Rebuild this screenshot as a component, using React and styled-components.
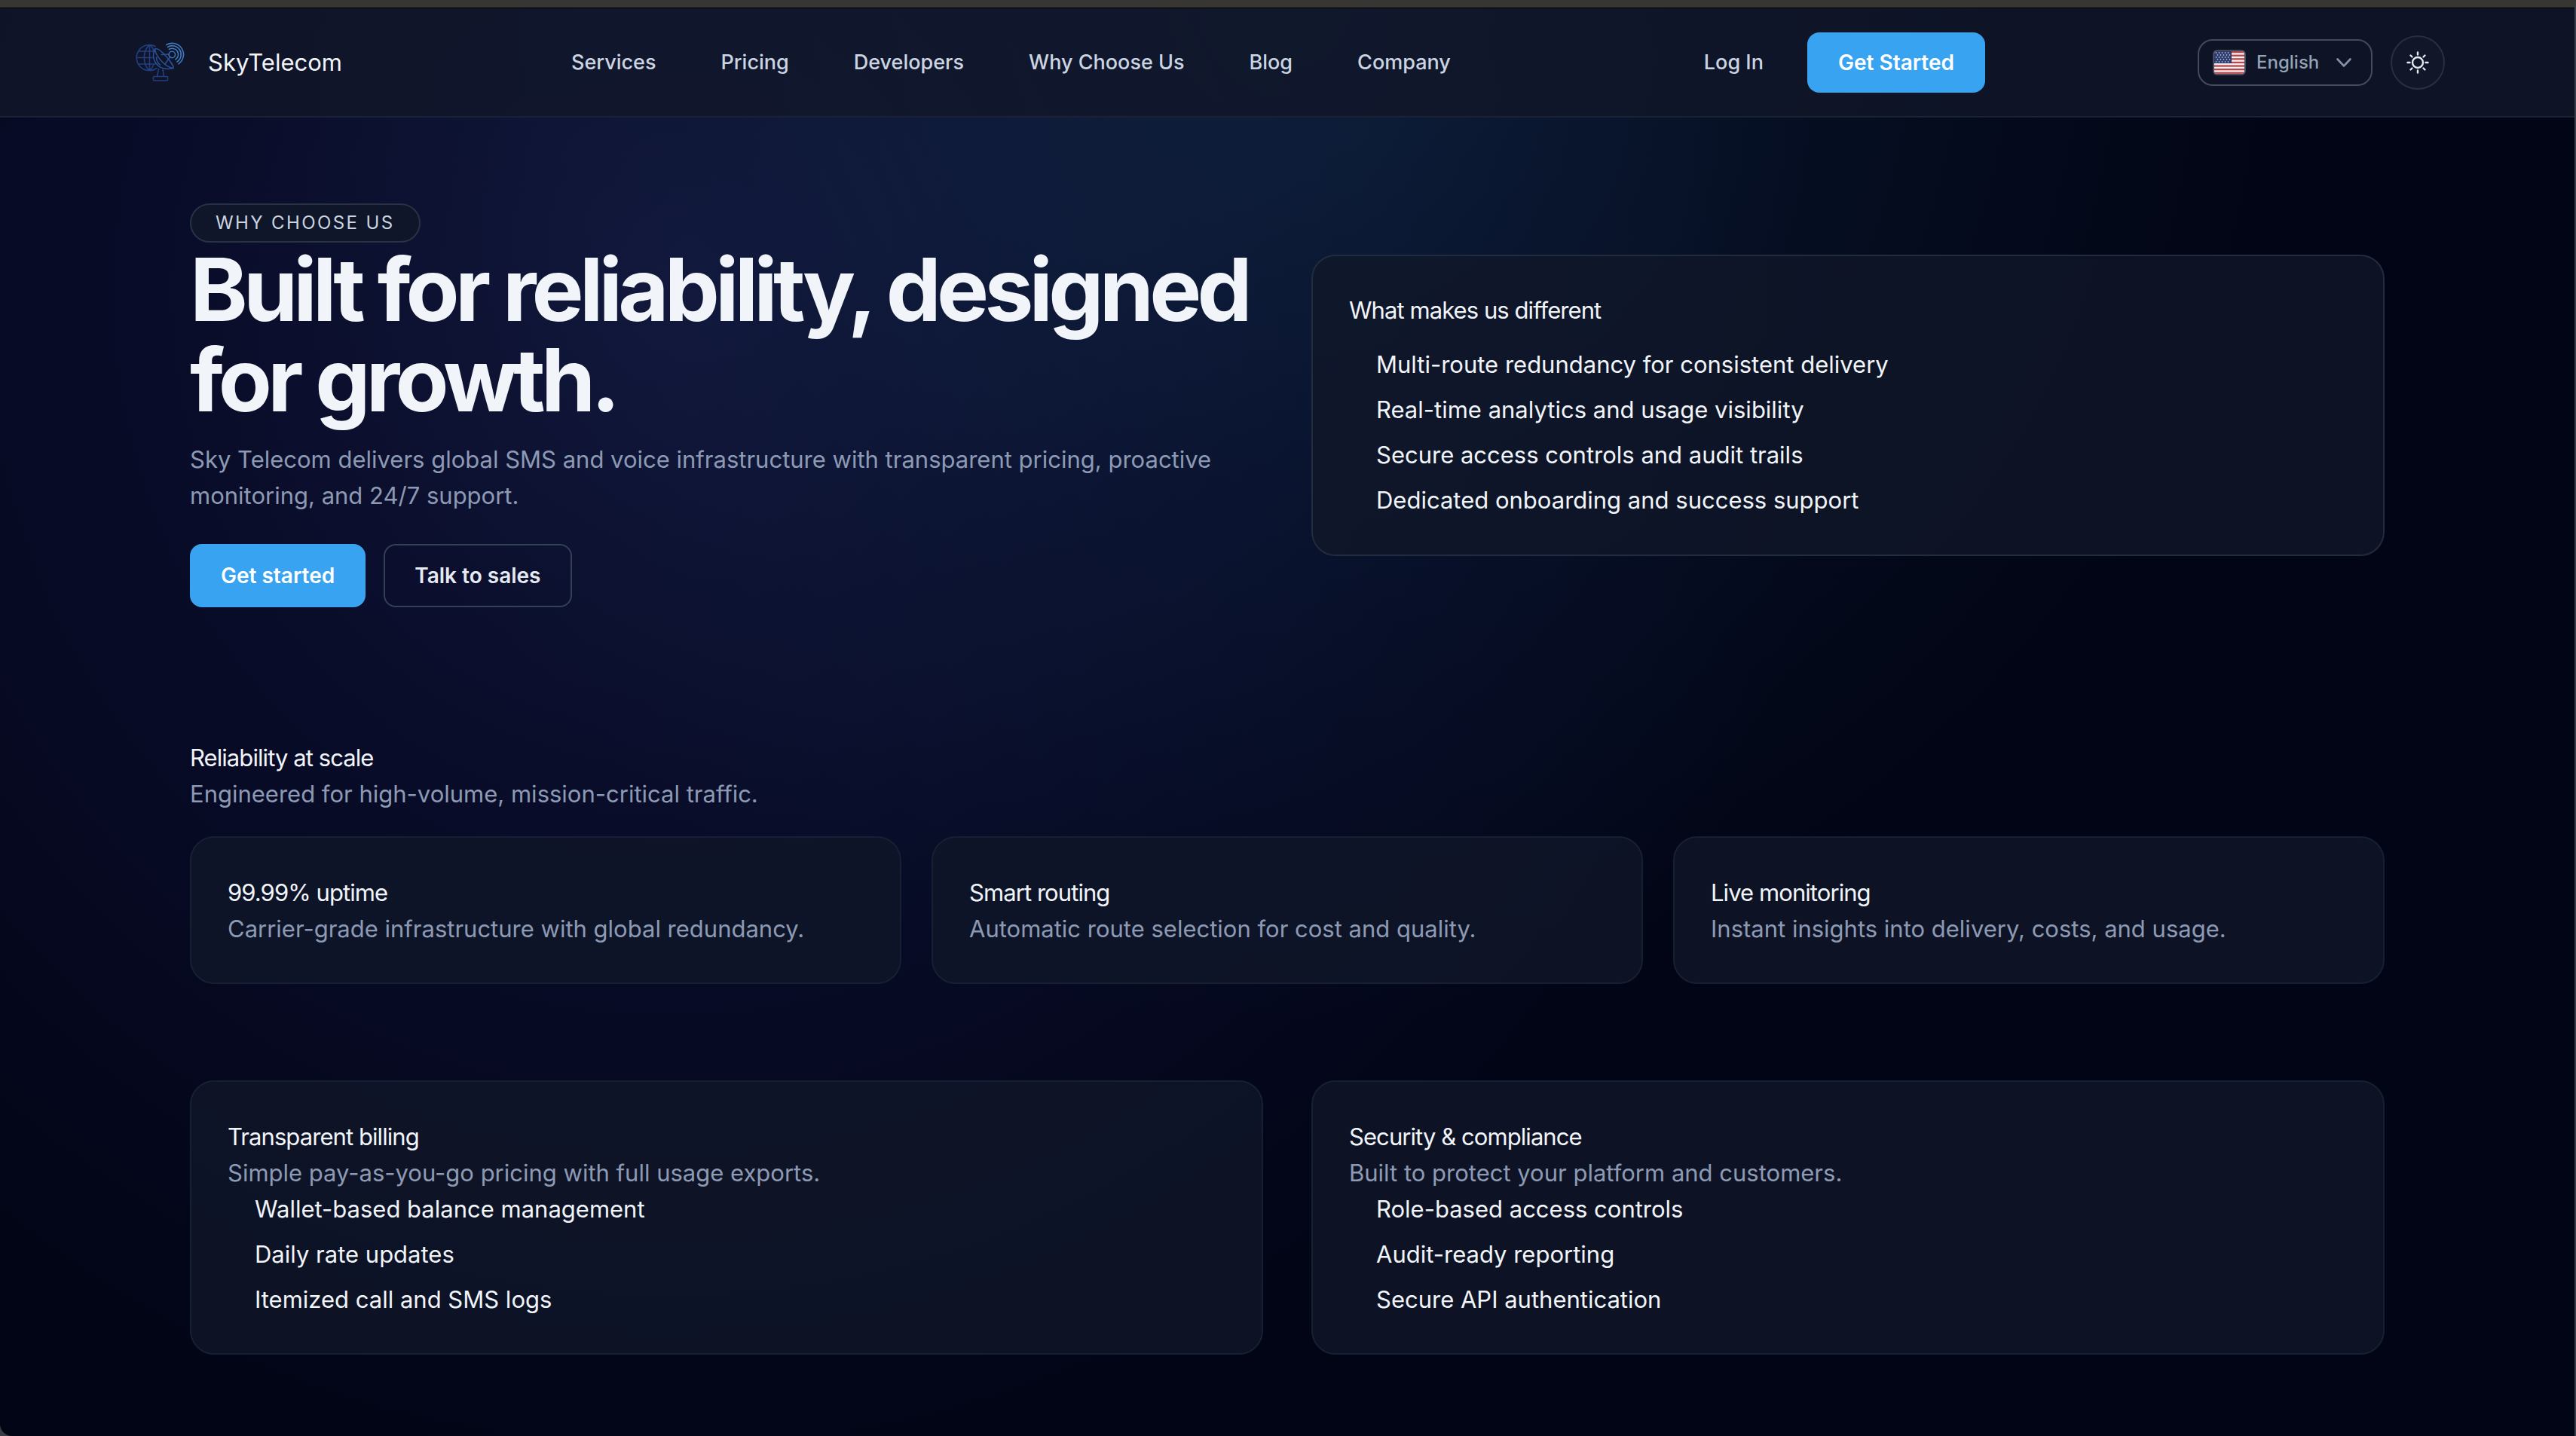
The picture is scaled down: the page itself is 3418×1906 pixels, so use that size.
import React from "react";
import styled, { createGlobalStyle } from "styled-components";

const Global = createGlobalStyle`
  *, *::before, *::after { box-sizing: border-box; }
  html { background: #3a3c46; }
  body {
    margin: 0;
    font-family: Inter, "Liberation Sans", sans-serif;
    font-size: 31px;
    line-height: 48px;
    color: #f1f5f9;
  }
  h1, h2, h3, p, ul { margin: 0; padding: 0; font-size: inherit; font-weight: 400; }
  a { color: inherit; text-decoration: none; }
  button, select { font-family: inherit; }
`;

const Page = styled.div`
  min-height: 100vh;
  display: flex;
  flex-direction: column;
  border-top: 10px solid #373632;
  border-right: 2px solid #3a3f4c;
  border-bottom-left-radius: 16px;
  background:
    radial-gradient(ellipse 1500px 1500px at 50% 0%, rgba(26, 68, 100, 0.36), rgba(20, 56, 90, 0.16) 50%, rgba(10, 50, 90, 0) 90%),
    radial-gradient(ellipse 1560px 1640px at 26% 20%, rgba(42, 46, 116, 0.37), rgba(28, 34, 104, 0.19) 55%, rgba(20, 20, 90, 0) 100%),
    #020515;
`;

const Header = styled.header`
  border-top: 1px solid #000;
  border-bottom: 2px solid #1a2334;
  background: rgba(17, 23, 41, 0.8);
`;

const HeaderInner = styled.div`
  max-width: 3072px;
  margin: 0 auto;
  height: 143px;
  padding: 0 0 0 8px;
  display: flex;
  align-items: center;
`;

const Brand = styled.a`
  display: flex;
  align-items: center;
  gap: 28px;
  flex: 0 0 578px;
`;

const Nav = styled.nav`
  display: flex;
  gap: 86px;
  flex: 1;
`;

const NavLink = styled.a`
  font-size: 27px;
  line-height: 40px;
  font-weight: 500;
  color: #cbd5e1;
  white-space: nowrap;
`;

const Account = styled.div`
  display: flex;
  align-items: center;
  gap: 58px;
  margin-right: 282px;
`;

const Button = styled.button`
  height: ${(p) => (p.$compact ? 80 : 84)}px;
  padding: 0 ${(p) => (p.$outline ? 39 : 41)}px;
  border-radius: 16px;
  border: ${(p) => (p.$outline ? "2px solid #334155" : "0")};
  background: ${(p) => (p.$outline ? "transparent" : "#38a3f1")};
  color: ${(p) => (p.$outline ? "#e5e9f2" : "#ffffff")};
  font-size: 28px;
  font-weight: 600;
  line-height: 40px;
  white-space: nowrap;
`;

const Tools = styled.div`
  display: flex;
  align-items: center;
  gap: 24px;
`;

const Language = styled.label`
  display: flex;
  align-items: center;
  width: 232px;
  height: 62px;
  padding: 0 26px 0 18px;
  gap: 14px;
  border: 2px solid #434b5d;
  border-radius: 20px;
`;

const LanguageSelect = styled.select`
  appearance: none;
  border: 0;
  padding: 0;
  background: transparent;
  color: #94a3b8;
  font-size: 24px;
  line-height: 32px;
  font-weight: 500;
  flex: 1;
  min-width: 0;
`;

const ThemeButton = styled.button`
  width: 72px;
  height: 72px;
  padding: 0;
  border: 2px solid #263044;
  border-radius: 50%;
  background: #111628;
  display: grid;
  place-items: center;
`;

const Main = styled.main`
  width: 100%;
  max-width: 3072px;
  margin: 0 auto;
  padding: 114px 80px 80px;
`;

const Hero = styled.section`
  display: grid;
  grid-template-columns: 1fr 1fr;
  gap: 64px;
  align-items: center;
`;

const Pill = styled.span`
  display: block;
  width: fit-content;
  margin-bottom: 2px;
  padding: 8px 32px;
  border: 2px solid #273244;
  border-radius: 28px;
  background: #0f1629;
  color: #cbd5e1;
  font-size: 24px;
  line-height: 32px;
  letter-spacing: 0.1em;
  text-transform: uppercase;
`;

const Title = styled.h1`
  && { font-size: 116px; font-weight: 700; }
  line-height: 120px;
  letter-spacing: -0.05em;
`;

const Muted = styled.p`
  color: #8d9ab4;
`;

const Lead = styled(Muted)`
  margin-top: 22px;
`;

const Actions = styled.div`
  display: flex;
  gap: 24px;
  margin-top: 40px;
`;

const Card = styled.article`
  padding: ${(p) => (p.$strong ? "48px" : "49px 48px 47px")};
  border: 2px solid ${(p) => (p.$strong ? "#222c3f" : "#172033")};
  border-radius: 32px;
  background: rgba(17, 23, 41, 0.78);
`;

const Heading = styled.h2`
  letter-spacing: -0.03em;
`;

const List = styled.ul`
  list-style: none;
  display: grid;
  gap: 12px;
  margin-top: ${(p) => (p.$spaced ? 24 : 0)}px;
  && { padding-left: 36px; }
`;

const Reliability = styled.section`
  margin-top: 176px;
`;

const Thirds = styled.div`
  display: grid;
  grid-template-columns: repeat(3, 1fr);
  gap: 40px;
  margin-top: 32px;
`;

const Halves = styled.section`
  display: grid;
  grid-template-columns: 1fr 1fr;
  gap: 64px;
  margin-top: 128px;
`;

function Logo() {
  return (
    <svg width="68" height="68" viewBox="0 0 68 68" fill="none" stroke="#213f80" strokeWidth="1.6" strokeLinecap="round" aria-hidden="true">
      <path d="M28 41.500A17 17 0 1 1 26 12.500M18.500 10.500V44.500M18.500 10.500C9 18 9 37 18.500 44.500M18.500 10.500c4 3 5 6 6 9M18.500 44.500c3-2 4-4 5-7M4 19h20M1.500 27.500h22M4 36h22" />
      <path d="M25.500 16C19 28 28 47 50 41.500C52 38 31 12 25.500 16zM25.500 16C26 24 38 40 50 41.500" stroke="#294f97" />
      <path d="M34 23.500l10-.5M39 36l7-10M27.500 27c0 4 2 8 5 10" stroke="#294f97" />
      <path d="M30.500 42.500l-2 10M36 43.500l1.500 9" />
      <rect x="23.500" y="52.500" width="19" height="5.500" rx="1" />
      <circle cx="48.300" cy="23.500" r="4.200" stroke="#376fb4" />
      <path d="M44.300 16.500A8 8 0 0 1 52.900 30M42.500 13.500A11.500 11.500 0 0 1 54.900 33M40.800 10.500A15 15 0 0 1 56.900 35.800" stroke="#3d7abf" />
    </svg>
  );
}

function Flag() {
  return (
    <svg width="44" height="34" viewBox="0 0 44 34" aria-hidden="true">
      <defs>
        <clipPath id="flagClip"><rect x="2" y="2" width="40" height="30" rx="4" /></clipPath>
      </defs>
      <rect width="44" height="34" rx="6" fill="#434b5d" />
      <g clipPath="url(#flagClip)">
        <rect width="44" height="34" fill="#f3f1f2" />
        {[0, 1, 2, 3, 4, 5, 6].map((i) => (
          <rect key={i} y={2 + i * 4.6} width="44" height="2.3" fill="#b8474b" />
        ))}
        <rect width="25" height="18" fill="#2b3c70" />
        {[0, 1, 2, 3, 4].map((r) =>
          [0, 1, 2, 3, 4].map((c) => (
            <circle key={`${r}-${c}`} cx={4.5 + c * 4 + (r % 2) * 2} cy={4 + r * 3} r="0.8" fill="#e6e9f2" />
          ))
        )}
      </g>
    </svg>
  );
}

function Chevron() {
  return (
    <svg width="20" height="12" viewBox="0 0 20 12" fill="none" stroke="#8490a6" strokeWidth="2.6" strokeLinecap="round" strokeLinejoin="round" aria-hidden="true">
      <path d="M1.5 1.5L10 10.5 18.500 1.5" />
    </svg>
  );
}

function Sun() {
  return (
    <svg width="32" height="32" viewBox="0 0 32 32" fill="none" stroke="#e5e9f2" strokeWidth="2.4" strokeLinecap="round" aria-hidden="true">
      <circle cx="16" cy="16" r="7" />
      <path d="M16 2.500V5.500M16 26.500V29.500M2.500 16H5.500M26.500 16H29.500M6.500 6.500L8.500 8.500M23.500 23.500L25.500 25.500M6.500 25.500L8.500 23.500M23.500 8.500L25.500 6.500" />
    </svg>
  );
}

const links = ["Services", "Pricing", "Developers", "Why Choose Us", "Blog", "Company"];

const differences = [
  "Multi-route redundancy for consistent delivery",
  "Real-time analytics and usage visibility",
  "Secure access controls and audit trails",
  "Dedicated onboarding and success support",
];

const features = [
  ["99.99% uptime", "Carrier-grade infrastructure with global redundancy."],
  ["Smart routing", "Automatic route selection for cost and quality."],
  ["Live monitoring", "Instant insights into delivery, costs, and usage."],
];

const details = [
  {
    title: "Transparent billing",
    text: "Simple pay-as-you-go pricing with full usage exports.",
    items: ["Wallet-based balance management", "Daily rate updates", "Itemized call and SMS logs"],
  },
  {
    title: "Security & compliance",
    text: "Built to protect your platform and customers.",
    items: ["Role-based access controls", "Audit-ready reporting", "Secure API authentication"],
  },
];

export default function App() {
  return (
    <Page>
      <Global />
      <Header>
        <HeaderInner>
          <Brand href="#">
            <Logo />
            SkyTelecom
          </Brand>
          <Nav>
            {links.map((l) => (
              <NavLink key={l} href="#">{l}</NavLink>
            ))}
          </Nav>
          <Account>
            <NavLink href="#">Log In</NavLink>
            <Button $compact>Get Started</Button>
          </Account>
          <Tools>
            <Language>
              <Flag />
              <LanguageSelect aria-label="Language" defaultValue="en">
                <option value="en">English</option>
              </LanguageSelect>
              <Chevron />
            </Language>
            <ThemeButton aria-label="Toggle theme">
              <Sun />
            </ThemeButton>
          </Tools>
        </HeaderInner>
      </Header>
      <Main>
        <Hero>
          <div>
            <Pill>Why Choose Us</Pill>
            <Title>Built for reliability, designed for growth.</Title>
            <Lead>
              Sky Telecom delivers global SMS and voice infrastructure with transparent pricing, proactive
              monitoring, and 24/7 support.
            </Lead>
            <Actions>
              <Button>Get started</Button>
              <Button $outline>Talk to sales</Button>
            </Actions>
          </div>
          <Card $strong>
            <Heading>What makes us different</Heading>
            <List $spaced>
              {differences.map((d) => (
                <li key={d}>{d}</li>
              ))}
            </List>
          </Card>
        </Hero>
        <Reliability>
          <Heading>Reliability at scale</Heading>
          <Muted>Engineered for high-volume, mission-critical traffic.</Muted>
          <Thirds>
            {features.map(([title, text]) => (
              <Card key={title}>
                <Heading as="h3">{title}</Heading>
                <Muted>{text}</Muted>
              </Card>
            ))}
          </Thirds>
        </Reliability>
        <Halves>
          {details.map((d) => (
            <Card key={d.title}>
              <Heading>{d.title}</Heading>
              <Muted>{d.text}</Muted>
              <List>
                {d.items.map((i) => (
                  <li key={i}>{i}</li>
                ))}
              </List>
            </Card>
          ))}
        </Halves>
      </Main>
    </Page>
  );
}
